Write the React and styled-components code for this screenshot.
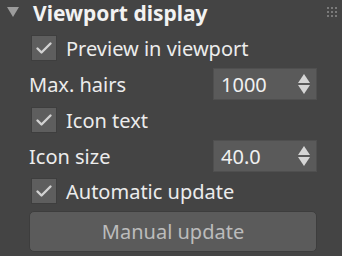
import React from 'react';
import styled, { createGlobalStyle } from 'styled-components';

const Global = createGlobalStyle`
    body {
        margin: 0;
        background: #444444;
        font-family: "Noto Sans", "Open Sans", sans-serif;
    }
`

const Panel = styled.div`
    width: 342px;
    height: 256px;
    background: #444444;
    display: flex;
    flex-direction: column;
    box-sizing: border-box;
    color: #e8e8e8;
`

const Header = styled.div`
    height: 30px;
    display: flex;
    align-items: flex-start;
    padding: 7px 5px 0 7px;
    box-sizing: border-box;
`

const Title = styled.div`
    font-weight: bold;
    font-size: 21px;
    line-height: 12px;
    margin-left: 14px;
    color: #f2f2f2;
`

const Grip = styled.div`
    margin-left: auto;
    display: grid;
    grid-template-columns: repeat(3, 2px);
    grid-auto-rows: 2px;
    gap: 2px;
`

const Dot = styled.span`
    background: #7a7a7a;
`

const Row = styled.div`
    height: ${props => props.h || 36}px;
    display: flex;
    align-items: center;
    padding: 0 25px 0 ${props => props.indent || 29}px;
    box-sizing: border-box;
`

const Box = styled.div`
    width: 26px;
    height: 26px;
    box-sizing: border-box;
    background: #5e5e5e;
    border: 1px solid #3e3e3e;
    display: flex;
    align-items: center;
    justify-content: center;
    margin-right: 9px;
`

const Label = styled.span`
    font-size: 20px;
    color: #ececec;
`

const Spinner = styled.div`
    margin-left: auto;
    width: 104px;
    height: 32px;
    box-sizing: border-box;
    background: #5a5a5a;
    border: 1px solid #4f4f4f;
    display: flex;
    align-items: center;
    padding: 0 6px 0 7px;
    font-size: 20px;
    color: #f0f0f0;
`

const Arrows = styled.div`
    margin-left: auto;
    display: flex;
    flex-direction: column;
    gap: 2px;
`

const Button = styled.div`
    margin: 3px 25px 0 29px;
    height: 41px;
    box-sizing: border-box;
    background: #5b5b5b;
    border: 1px solid #3d3d3d;
    border-radius: 5px;
    display: flex;
    align-items: center;
    justify-content: center;
    font-size: 20px;
    color: #bcbcbc;
`

const Check = () => (
    <Box>
        <svg width="18" height="16" viewBox="0 0 18 16">
            <path d="M2.5 8.5 L6.5 12.5 L15.5 3.5" fill="none" stroke="#d2d2d2" strokeWidth="2.4" strokeLinecap="round" strokeLinejoin="round" />
        </svg>
    </Box>
)

const SpinArrows = () => (
    <Arrows>
        <svg width="12" height="9" viewBox="0 0 12 9"><polygon points="6,0 12,9 0,9" fill="#d6d6d6" /></svg>
        <svg width="12" height="9" viewBox="0 0 12 9"><polygon points="0,0 12,0 6,9" fill="#d6d6d6" /></svg>
    </Arrows>
)

const App = () => {
    return (
        <Panel>
            <Global />
            <Header>
                <svg width="12" height="10" viewBox="0 0 12 10">
                    <polygon points="0,0 12,0 6,10" fill="#9c9c9c" />
                </svg>
                <Title>Viewport display</Title>
                <Grip>
                    {Array.from({ length: 9 }).map((_, i) => <Dot key={i} />)}
                </Grip>
            </Header>
            <Row indent={31}>
                <Check />
                <Label>Preview in viewport</Label>
            </Row>
            <Row>
                <Label>Max. hairs</Label>
                <Spinner>1000<SpinArrows /></Spinner>
            </Row>
            <Row indent={31}>
                <Check />
                <Label>Icon text</Label>
            </Row>
            <Row>
                <Label>Icon size</Label>
                <Spinner>40.0<SpinArrows /></Spinner>
            </Row>
            <Row indent={31} h={34}>
                <Check />
                <Label>Automatic update</Label>
            </Row>
            <Button>Manual update</Button>
        </Panel>
    )
};

export default App;
